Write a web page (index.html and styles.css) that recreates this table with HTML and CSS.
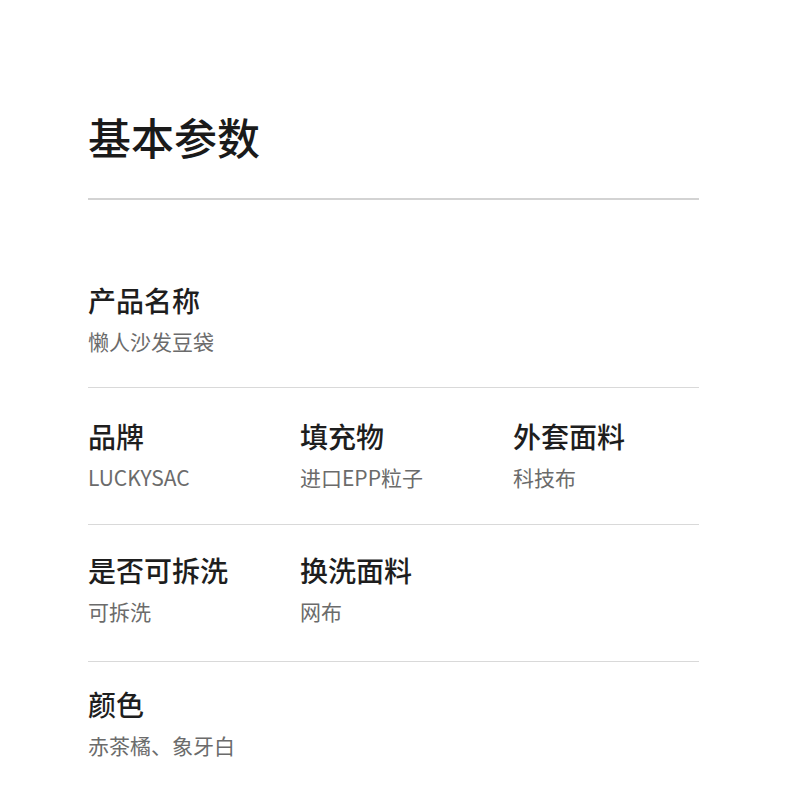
FILE: index.html
```html
<!DOCTYPE html>
<html lang="zh-CN">
<head>
<meta charset="utf-8">
<title>基本参数</title>
<link rel="stylesheet" href="styles.css">
</head>
<body>
<div class="page">
  <h1 class="title">基本参数</h1>
  <div class="rule"></div>
  <div class="rows">
    <div class="row">
      <div class="item">
        <div class="label">产品名称</div>
        <div class="value">懒人沙发豆袋</div>
      </div>
    </div>
    <div class="row">
      <div class="item">
        <div class="label">品牌</div>
        <div class="value">LUCKYSAC</div>
      </div>
      <div class="item">
        <div class="label">填充物</div>
        <div class="value">进口EPP粒子</div>
      </div>
      <div class="item">
        <div class="label">外套面料</div>
        <div class="value">科技布</div>
      </div>
    </div>
    <div class="row tight">
      <div class="item">
        <div class="label">是否可拆洗</div>
        <div class="value">可拆洗</div>
      </div>
      <div class="item">
        <div class="label">换洗面料</div>
        <div class="value">网布</div>
      </div>
    </div>
    <div class="row last">
      <div class="item">
        <div class="label">颜色</div>
        <div class="value">赤茶橘、象牙白</div>
      </div>
    </div>
  </div>
</div>
</body>
</html>
```
FILE: styles.css
```css
html, body {
  margin: 0;
  padding: 0;
  background: #ffffff;
}
body {
  font-family: "Noto Sans CJK SC", "Noto Sans", sans-serif;
  color: #1f1f1f;
}
.page {
  width: 611px;
  padding: 106px 0 0 88px;
}
.title {
  margin: 0;
  font-size: 43px;
  line-height: 60px;
  font-weight: 500;
  color: #1a1a1a;
}
.rule {
  margin-top: 32px;
  height: 2px;
  background: #d3d3d3;
}
.rows {
  padding-top: 80px;
}
.row {
  display: grid;
  grid-template-columns: 212px 213px 186px;
  padding: 28px 0 32px;
  border-bottom: 1px solid #d9d9d9;
}
.rows .row:first-child {
  padding-top: 0;
  padding-bottom: 31px;
}
.row.tight {
  padding-top: 25px;
  padding-bottom: 35px;
}
.row.last {
  padding-top: 22px;
  border-bottom: none;
}
.label {
  font-size: 28px;
  line-height: 40px;
  font-weight: 500;
  color: #1e1e1e;
}
.value {
  margin-top: 6px;
  font-size: 21px;
  line-height: 30px;
  font-weight: 400;
  color: #6b6b6b;
}
```
